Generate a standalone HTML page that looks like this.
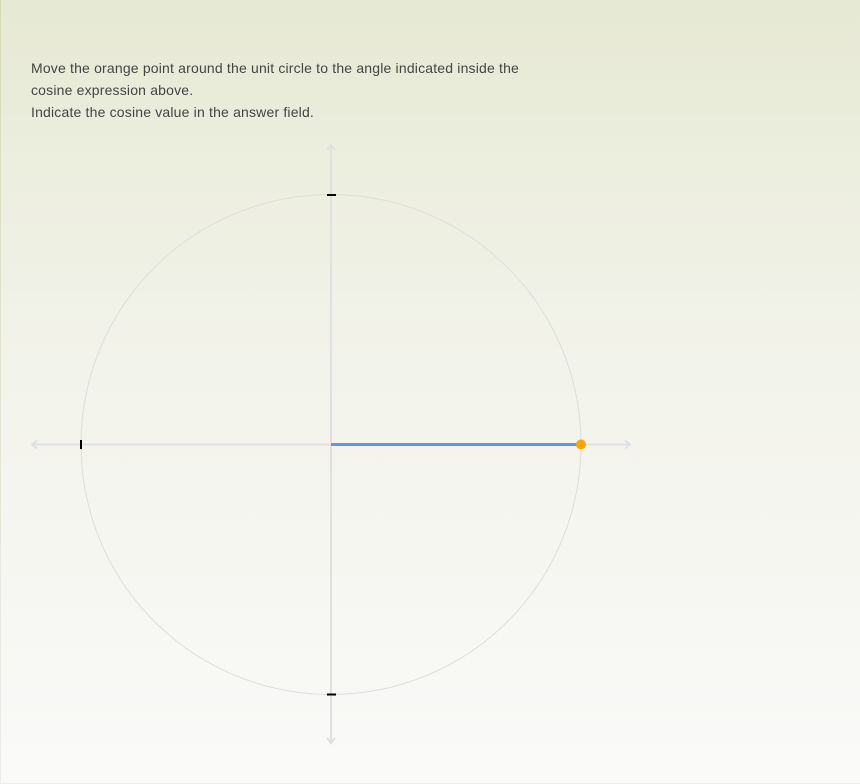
<!DOCTYPE html>
<html><head><style>
html,body{margin:0;padding:0;width:860px;height:784px;overflow:hidden}
body{background:linear-gradient(#e6e9d4 0%,#f1f2e8 40%,#fafaf9 100%);position:relative;font-family:"Liberation Sans",sans-serif}
.edge{position:absolute;left:0;top:0;width:1px;height:784px;background:linear-gradient(#d4dcb0,#ececea)}
.bot{position:absolute;left:0;top:783px;width:860px;height:1px;background:#efefef}
.txt{position:absolute;left:31px;top:57px;font-size:14px;line-height:22px;color:#444;letter-spacing:0.18px}
svg{position:absolute;left:0;top:0}
</style></head><body>
<div class="edge"></div>
<div class="bot"></div>
<div class="txt">Move the orange point around the unit circle to the angle indicated inside the<br>cosine expression above.<br>Indicate the cosine value in the answer field.</div>
<svg width="860" height="784">
<circle cx="331" cy="444.5" r="250" fill="none" stroke="#ddd" stroke-width="1"/>
<g stroke="#e0e0e0" stroke-width="2" fill="none">
<line x1="32" y1="444.5" x2="630" y2="444.5"/>
<line x1="331" y1="145" x2="331" y2="743"/>
<polyline points="37,440.5 32,444.5 37,448.5"/>
<polyline points="625,440.5 630,444.5 625,448.5"/>
<polyline points="327,150 331,145 335,150"/>
<polyline points="327,738 331,743 335,738"/>
</g>
<g stroke="#000" stroke-width="2">
<line x1="327" y1="195" x2="336" y2="195"/>
<line x1="327" y1="694.5" x2="336" y2="694.5"/>
<line x1="81" y1="440" x2="81" y2="449"/>
</g>
<line x1="331" y1="444.5" x2="581" y2="444.5" stroke="#6495ed" stroke-width="3"/>
<circle cx="581" cy="444.5" r="5" fill="#ffa500"/>
</svg>
</body></html>
